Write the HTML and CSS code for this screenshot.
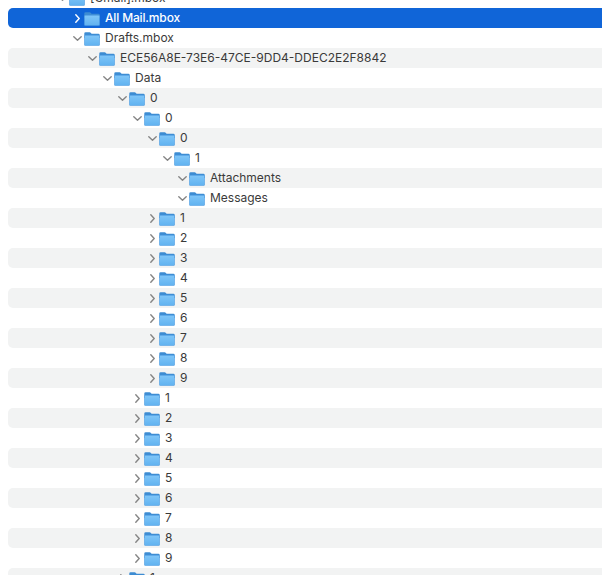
FILE: index.html
```html
<!DOCTYPE html>
<html lang="en">
<head>
<meta charset="utf-8">
<title>Finder list</title>
<link rel="stylesheet" href="styles.css">
</head>
<body>
<svg class="defs" aria-hidden="true">
  <defs>
    <linearGradient id="fb" x1="0" y1="0" x2="0" y2="1"><stop offset="0" stop-color="#80c6f8"/><stop offset="1" stop-color="#60b2f0"/></linearGradient>
    <symbol id="folder" viewBox="0 0 16 14">
      <path d="M0.3 4V1.6A1.3 1.3 0 0 1 1.6 .3h4c.6 0 .9.2 1.3.6l.7.8h6.8A1.3 1.3 0 0 1 15.7 3v3H.3z" fill="#3d8cd2"/>
      <rect x="0.4" y="3.3" width="15.2" height="10.3" rx="1.2" fill="url(#fb)" stroke="#4d9be0" stroke-width="0.6"/>
    </symbol>
    <symbol id="down" viewBox="0 0 9 5"><path d="M.8.8l3.7 3.4L8.2.8" fill="none" stroke="currentColor" stroke-width="1.4" stroke-linecap="round" stroke-linejoin="round"/></symbol>
    <symbol id="right" viewBox="0 0 5 9"><path d="M.8.8l3.4 3.7L.8 8.2" fill="none" stroke="currentColor" stroke-width="1.4" stroke-linecap="round" stroke-linejoin="round"/></symbol>
  </defs>
</svg>
<div class="tree">
  <div class="row d0"><span class="tw"><svg class="down"><use href="#down"/></svg></span><svg class="folder"><use href="#folder"/></svg><span class="name">[Gmail].mbox</span></div>
  <div class="row d1 selected"><span class="tw"><svg class="right"><use href="#right"/></svg></span><svg class="folder"><use href="#folder"/></svg><span class="name">All Mail.mbox</span></div>
  <div class="row d1"><span class="tw"><svg class="down"><use href="#down"/></svg></span><svg class="folder"><use href="#folder"/></svg><span class="name">Drafts.mbox</span></div>
  <div class="row d2 alt"><span class="tw"><svg class="down"><use href="#down"/></svg></span><svg class="folder"><use href="#folder"/></svg><span class="name">ECE56A8E-73E6-47CE-9DD4-DDEC2E2F8842</span></div>
  <div class="row d3"><span class="tw"><svg class="down"><use href="#down"/></svg></span><svg class="folder"><use href="#folder"/></svg><span class="name">Data</span></div>
  <div class="row d4 alt"><span class="tw"><svg class="down"><use href="#down"/></svg></span><svg class="folder"><use href="#folder"/></svg><span class="name">0</span></div>
  <div class="row d5"><span class="tw"><svg class="down"><use href="#down"/></svg></span><svg class="folder"><use href="#folder"/></svg><span class="name">0</span></div>
  <div class="row d6 alt"><span class="tw"><svg class="down"><use href="#down"/></svg></span><svg class="folder"><use href="#folder"/></svg><span class="name">0</span></div>
  <div class="row d7"><span class="tw"><svg class="down"><use href="#down"/></svg></span><svg class="folder"><use href="#folder"/></svg><span class="name">1</span></div>
  <div class="row d8 alt"><span class="tw"><svg class="down"><use href="#down"/></svg></span><svg class="folder"><use href="#folder"/></svg><span class="name">Attachments</span></div>
  <div class="row d8"><span class="tw"><svg class="down"><use href="#down"/></svg></span><svg class="folder"><use href="#folder"/></svg><span class="name">Messages</span></div>
  <div class="row d6 alt"><span class="tw"><svg class="right"><use href="#right"/></svg></span><svg class="folder"><use href="#folder"/></svg><span class="name">1</span></div>
  <div class="row d6"><span class="tw"><svg class="right"><use href="#right"/></svg></span><svg class="folder"><use href="#folder"/></svg><span class="name">2</span></div>
  <div class="row d6 alt"><span class="tw"><svg class="right"><use href="#right"/></svg></span><svg class="folder"><use href="#folder"/></svg><span class="name">3</span></div>
  <div class="row d6"><span class="tw"><svg class="right"><use href="#right"/></svg></span><svg class="folder"><use href="#folder"/></svg><span class="name">4</span></div>
  <div class="row d6 alt"><span class="tw"><svg class="right"><use href="#right"/></svg></span><svg class="folder"><use href="#folder"/></svg><span class="name">5</span></div>
  <div class="row d6"><span class="tw"><svg class="right"><use href="#right"/></svg></span><svg class="folder"><use href="#folder"/></svg><span class="name">6</span></div>
  <div class="row d6 alt"><span class="tw"><svg class="right"><use href="#right"/></svg></span><svg class="folder"><use href="#folder"/></svg><span class="name">7</span></div>
  <div class="row d6"><span class="tw"><svg class="right"><use href="#right"/></svg></span><svg class="folder"><use href="#folder"/></svg><span class="name">8</span></div>
  <div class="row d6 alt"><span class="tw"><svg class="right"><use href="#right"/></svg></span><svg class="folder"><use href="#folder"/></svg><span class="name">9</span></div>
  <div class="row d5"><span class="tw"><svg class="right"><use href="#right"/></svg></span><svg class="folder"><use href="#folder"/></svg><span class="name">1</span></div>
  <div class="row d5 alt"><span class="tw"><svg class="right"><use href="#right"/></svg></span><svg class="folder"><use href="#folder"/></svg><span class="name">2</span></div>
  <div class="row d5"><span class="tw"><svg class="right"><use href="#right"/></svg></span><svg class="folder"><use href="#folder"/></svg><span class="name">3</span></div>
  <div class="row d5 alt"><span class="tw"><svg class="right"><use href="#right"/></svg></span><svg class="folder"><use href="#folder"/></svg><span class="name">4</span></div>
  <div class="row d5"><span class="tw"><svg class="right"><use href="#right"/></svg></span><svg class="folder"><use href="#folder"/></svg><span class="name">5</span></div>
  <div class="row d5 alt"><span class="tw"><svg class="right"><use href="#right"/></svg></span><svg class="folder"><use href="#folder"/></svg><span class="name">6</span></div>
  <div class="row d5"><span class="tw"><svg class="right"><use href="#right"/></svg></span><svg class="folder"><use href="#folder"/></svg><span class="name">7</span></div>
  <div class="row d5 alt"><span class="tw"><svg class="right"><use href="#right"/></svg></span><svg class="folder"><use href="#folder"/></svg><span class="name">8</span></div>
  <div class="row d5"><span class="tw"><svg class="right"><use href="#right"/></svg></span><svg class="folder"><use href="#folder"/></svg><span class="name">9</span></div>
  <div class="row d4 alt"><span class="tw"><svg class="right"><use href="#right"/></svg></span><svg class="folder"><use href="#folder"/></svg><span class="name">1</span></div>
</div>
</body>
</html>
```
FILE: styles.css
```css
html, body {
  margin: 0;
  height: 100%;
  overflow: hidden;
  background: #fff;
}

.defs {
  display: block;
  width: 0;
  height: 0;
}

.tree {
  margin-top: -12px;
  padding-left: 8px;
  font-family: "Inter", "Liberation Sans", sans-serif;
  font-size: 12px;
}

.row {
  display: flex;
  align-items: center;
  height: 20px;
  border-radius: 5px 0 0 5px;
  color: #3a3a3a;
}

.alt {
  background: #f2f3f3;
}

.selected {
  background: #1065d8;
  color: #fff;
  font-weight: 500;
  letter-spacing: -0.15px;
}

.d0 { padding-left: 49px; }
.d1 { padding-left: 64px; }
.d2 { padding-left: 79px; }
.d3 { padding-left: 94px; }
.d4 { padding-left: 109px; }
.d5 { padding-left: 124px; }
.d6 { padding-left: 139px; }
.d7 { padding-left: 154px; }
.d8 { padding-left: 169px; }

.tw {
  display: flex;
  justify-content: center;
  align-items: center;
  width: 10px;
  margin-right: 2px;
  color: #858585;
}

.selected .tw {
  color: #fff;
}

.down {
  width: 9px;
  height: 5px;
}

.right {
  width: 5px;
  height: 9px;
}

.folder {
  width: 16px;
  height: 14px;
  margin-top: 2px;
  margin-right: 5px;
  flex: none;
}

.name {
  padding-bottom: 2px;
  white-space: nowrap;
}
```
